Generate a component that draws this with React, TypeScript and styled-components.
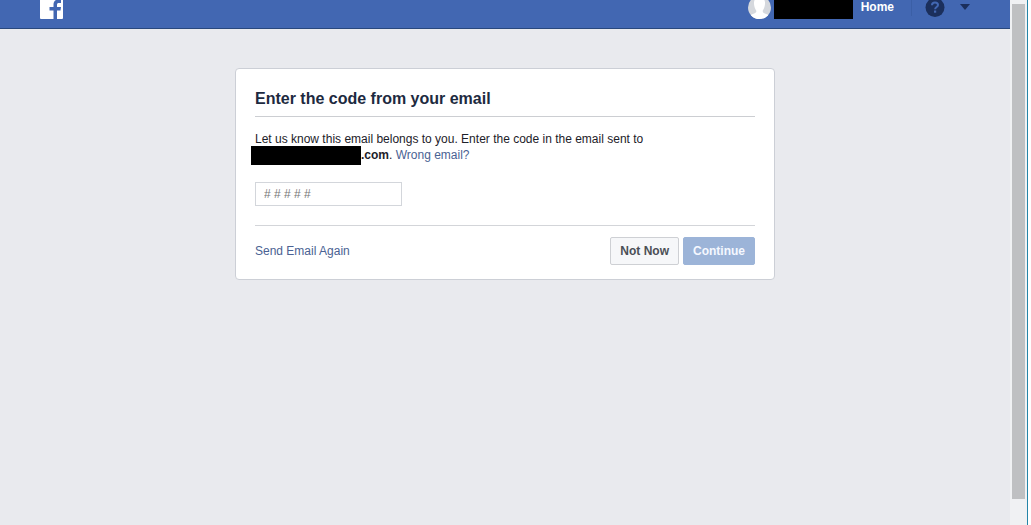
import React from "react";
import styled, { createGlobalStyle } from "styled-components";

const GlobalStyle = createGlobalStyle`
  * { box-sizing: border-box; }
  body {
    margin: 0;
    background: #fff;
    color: #1d2129;
    font: 12px/16px "Liberation Sans", Arial, sans-serif;
  }
  a { text-decoration: none; }
`;

const Window = styled.div`
  display: flex;
  height: 100vh;
  padding-right: 3px;
  overflow: hidden;
`;

const Page = styled.div`
  flex: 1;
  background: #e9eaee;
`;

const Header = styled.header`
  height: 29px;
  background: #4267b2;
  border-bottom: 1px solid #29487d;
  overflow: hidden;
`;

const HeaderRow = styled.div`
  display: flex;
  align-items: center;
  justify-content: space-between;
  height: 42px;
  margin-top: -14px;
  padding: 0 40px;
`;

const LogoLink = styled.a`
  display: flex;
`;

const Nav = styled.nav`
  display: flex;
  align-items: center;
`;

const Redacted = styled.span<{ $width: number; $height: number }>`
  display: inline-block;
  flex: none;
  width: ${(p) => p.$width}px;
  height: ${(p) => p.$height}px;
  background: #000;
`;

const Profile = styled.a`
  display: flex;
  align-items: center;
  gap: 3px;
`;

const HomeLink = styled.a`
  padding: 0 17px 0 8px;
  color: #fff;
  font-weight: bold;
`;

const Separator = styled.span`
  width: 1px;
  height: 18px;
  margin-right: 13px;
  background: #3b5fa6;
`;

const IconButton = styled.button`
  display: flex;
  margin-right: 15px;
  padding: 0;
  border: 0;
  background: none;

  &:last-child { margin-right: 0; }
`;

const Content = styled.main`
  display: flex;
  justify-content: center;
  padding: 39px 20px;
`;

const Card = styled.form`
  width: 100%;
  max-width: 540px;
  padding: 20px 19px 14px;
  background: #fff;
  border: 1px solid #cccfd6;
  border-radius: 4px;
`;

const Title = styled.h1`
  margin: 0;
  padding-bottom: 7px;
  border-bottom: 1px solid #ccced2;
  color: #1d2a40;
  font-size: 16px;
  line-height: 20px;
`;

const Body = styled.div`
  padding: 14px 0 19px;
  border-bottom: 1px solid #d3d5d9;
`;

const Message = styled.p`
  margin: 0 0 19px;
`;

const Email = styled.strong`
  ${Redacted} {
    margin: -2px 0 -2px -4px;
    vertical-align: middle;
  }
`;

const TextLink = styled.a`
  color: #4a6293;
`;

const CodeInput = styled.input`
  display: block;
  width: 147px;
  height: 24px;
  padding: 0 8px;
  border: 1px solid #d3d6db;
  border-radius: 0;
  background: #fff;
  color: #1d2129;
  font: inherit;

  &::placeholder { color: #777; opacity: 1; }
`;

const Footer = styled.footer`
  display: flex;
  align-items: center;
  justify-content: space-between;
  padding-top: 11px;
`;

const Actions = styled.div`
  display: flex;
  gap: 4px;
`;

const Button = styled.button<{ $primary?: boolean }>`
  height: 28px;
  padding: 0 9px;
  border: 1px solid ${(p) => (p.$primary ? "#9cb4d8" : "#ced0d4")};
  border-radius: 2px;
  background: ${(p) => (p.$primary ? "#9cb4d8" : "#f6f7f9")};
  color: ${(p) => (p.$primary ? "#f5f8ff" : "#4b4f56")};
  font: bold 12px/16px "Liberation Sans", Arial, sans-serif;
`;

const ScrollTrack = styled.div`
  width: 18px;
  padding: 4px 2px 0;
  background: #f0f1f3;
  border-right: 1px solid #2585a8;
`;

const ScrollThumb = styled.div`
  height: 95%;
  background: #bfc0c2;
`;

const Logo = () => (
  <svg width="23" height="24" viewBox="0 0 23 24" aria-hidden="true">
    <rect width="23" height="24" rx="1" fill="#fff" />
    <path
      d="M13.500 24v-8.500H9.500V12h4V9.500C13.500 6 15.500 4.500 18.500 4.500H21V8h-2c-1.500 0-2 .6-2 2v2h4l-.5 3.500H17V24z"
      fill="#4267b2"
    />
  </svg>
);

const Avatar = () => (
  <svg width="23" height="24" viewBox="0 0 23 24" aria-hidden="true">
    <defs>
      <clipPath id="avatar-circle">
        <circle cx="11.500" cy="12.500" r="11.500" />
      </clipPath>
    </defs>
    <g clipPath="url(#avatar-circle)">
      <rect width="23" height="24" fill="#d5d8dd" />
      <path
        d="M11.500 2C7.500 2 5.700 5 6 9c.2 3 1.200 5 2.200 6.500.4 1.500-.3 2.500-2 3L1 20.500V24h21v-3.500l-5.200-2c-1.700-.5-2.400-1.500-2-3C15.800 14 16.800 12 17 9c.3-4-1.500-7-5.500-7z"
        fill="#fff"
      />
    </g>
  </svg>
);

const HelpIcon = () => (
  <svg width="20" height="20" viewBox="0 0 20 20" aria-hidden="true">
    <circle cx="10" cy="10.500" r="9.500" fill="#1b2f5c" />
    <path
      d="M7 8.300C7 6.500 8.300 5.600 10 5.600s3 .9 3 2.500c0 1.900-2.900 2-2.900 4.200"
      fill="none"
      stroke="#4267b2"
      strokeWidth="2"
    />
    <rect x="9" y="13.500" width="2.200" height="2.200" fill="#4267b2" />
  </svg>
);

const CaretIcon = () => (
  <svg width="10" height="6" viewBox="0 0 10 6" aria-hidden="true">
    <path d="M0 0h10L5 6z" fill="#1b2f5c" />
  </svg>
);

export default function App() {
  return (
    <>
      <GlobalStyle />
      <Window>
        <Page>
          <Header>
            <HeaderRow>
              <LogoLink href="#" aria-label="Facebook">
                <Logo />
              </LogoLink>
              <Nav>
                <Profile href="#" aria-label="Profile">
                  <Avatar />
                  <Redacted $width={79} $height={24} />
                </Profile>
                <HomeLink href="#">Home</HomeLink>
                <Separator />
                <IconButton type="button" aria-label="Help">
                  <HelpIcon />
                </IconButton>
                <IconButton type="button" aria-label="Account menu">
                  <CaretIcon />
                </IconButton>
              </Nav>
            </HeaderRow>
          </Header>
          <Content>
            <Card onSubmit={(e) => e.preventDefault()}>
              <Title>Enter the code from your email</Title>
              <Body>
                <Message>
                  Let us know this email belongs to you. Enter the code in the email sent to
                  <br />
                  <Email>
                    <Redacted $width={110} $height={19} />
                    .com
                  </Email>
                  . <TextLink href="#">Wrong email?</TextLink>
                </Message>
                <CodeInput type="text" aria-label="Confirmation code" placeholder="# # # # #" />
              </Body>
              <Footer>
                <TextLink href="#">Send Email Again</TextLink>
                <Actions>
                  <Button type="button">Not Now</Button>
                  <Button type="submit" $primary disabled>
                    Continue
                  </Button>
                </Actions>
              </Footer>
            </Card>
          </Content>
        </Page>
        <ScrollTrack>
          <ScrollThumb />
        </ScrollTrack>
      </Window>
    </>
  );
}
